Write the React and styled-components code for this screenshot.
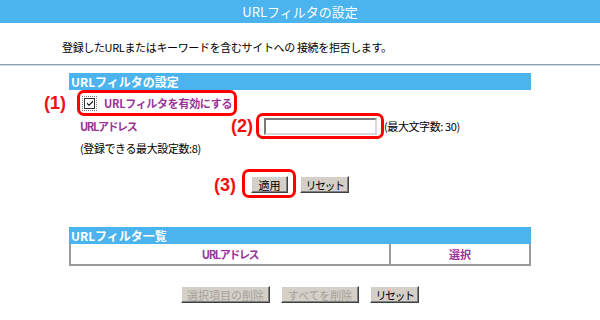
import React from 'react';
import styled, { createGlobalStyle } from 'styled-components';

const GlobalStyle = createGlobalStyle`
  body {
    margin: 0;
    background: #fff;
    font-family: "Noto Sans CJK JP", "Liberation Sans", sans-serif;
    font-size: 11px;
    color: #000;
  }
`;

const Page = styled.div`
  width: 600px;
  height: 320px;
  overflow: hidden;
`;

const TitleBar = styled.div`
  height: 23px;
  background: #4bb4ef;
  color: #fff;
  font-size: 13px;
  display: flex;
  align-items: center;
  justify-content: center;
`;

const Intro = styled.p`
  margin: 0;
  height: 41px;
  box-sizing: border-box;
  padding: 17px 0 0 62px;
  line-height: 14px;
  letter-spacing: -0.35px;
`;

const Divider = styled.div`
  height: 0;
  border-top: 1px solid #8a9fb1;
  border-bottom: 1px solid #cfdce7;
`;

const Panel = styled.div`
  width: 462px;
  margin: ${p => p.$top}px auto 0;
`;

const SectionHeader = styled.div`
  height: 17px;
  line-height: 17px;
  padding-left: 2px;
  background: #4bb4ef;
  color: #fff;
  font-size: 12px;
  font-weight: bold;
`;

const Row = styled.div`
  display: flex;
  align-items: center;
  height: ${p => p.$h || 22}px;
  margin-top: ${p => p.$mt || 0}px;
  padding-left: ${p => p.$pl || 0}px;
  justify-content: ${p => (p.$center ? 'center' : 'flex-start')};
  gap: ${p => p.$gap || 0}px;
`;

const Purple = styled.span`
  color: #993399;
  font-weight: bold;
  letter-spacing: ${p => p.$ls || 0}px;
  white-space: nowrap;
`;

const LabelCell = styled.div`
  width: 184px;
  padding-left: 11px;
`;

const Note = styled.span`
  margin-left: ${p => p.$ml || 0}px;
  letter-spacing: -0.4px;
  white-space: nowrap;
`;

const Mark = styled.span`
  position: relative;
  display: inline-flex;
  align-items: center;
  gap: 9px;

  &::after {
    content: '';
    position: absolute;
    top: ${p => -p.$t}px;
    right: ${p => -p.$r}px;
    bottom: ${p => -p.$b}px;
    left: ${p => -p.$l}px;
    border: 3px solid #f00;
    border-radius: 7px;
    pointer-events: none;
  }
`;

const MarkLabel = styled.span`
  position: absolute;
  top: 50%;
  right: calc(100% + ${p => p.$gap}px);
  transform: translateY(-50%);
  font-family: "Liberation Sans", sans-serif;
  font-weight: bold;
  font-size: 18px;
  color: #f01010;
  white-space: nowrap;
`;

const Checkbox = styled.span`
  width: 9px;
  height: 9px;
  border: 1px solid #333;
  outline: 1px dotted #777;
  outline-offset: 1px;
  background: #fff;
  display: flex;
  align-items: center;
  justify-content: center;
`;

const TextInput = styled.input`
  width: 113px;
  height: 17px;
  box-sizing: border-box;
  border: 2px solid;
  border-color: #7a7a7a #d8d8d8 #d8d8d8 #7a7a7a;
  background: #fff;
  padding: 0 2px;
  outline: none;
`;

const Button = styled.button`
  width: ${p => p.$w}px;
  height: 17px;
  padding: 0;
  box-sizing: border-box;
  background: #d4d0c8;
  border: 1px solid;
  border-color: #fff #404040 #404040 #fff;
  box-shadow: inset -1px -1px 0 #808080;
  font-family: "Noto Sans CJK JP", sans-serif;
  font-size: 11px;
  line-height: 14px;
  letter-spacing: ${p => p.$ls || 0}px;
  color: ${p => (p.disabled ? '#a4a09a' : '#000')};
  white-space: nowrap;
`;

const ListTable = styled.div`
  display: grid;
  grid-template-columns: 320px 1fr;
  height: 22px;
  box-sizing: border-box;
  border: 2px solid #9a9a9a;
  border-top: none;
`;

const ListHead = styled.div`
  display: flex;
  align-items: center;
  justify-content: center;
  border-right: ${p => (p.$split ? '2px solid #9a9a9a' : 'none')};
`;

const CheckMark = () => (
  <svg width="8" height="8" viewBox="0 0 8 8">
    <path d="M1 3.5 L3 5.5 L7 1.5 L7 3 L3 7 L1 5 Z" fill="#000" />
  </svg>
);

export default function App() {
  return (
    <Page>
      <GlobalStyle />
      <TitleBar>URLフィルタの設定</TitleBar>
      <Intro>登録したURLまたはキーワードを含むサイトへの 接続を拒否します。</Intro>
      <Divider />

      <Panel $top={7}>
        <SectionHeader>URLフィルタの設定</SectionHeader>
        <Row $h={24} $mt={1} $pl={15}>
          <Mark $t={5} $r={5} $b={5} $l={7}>
            <MarkLabel $gap={18}>(1)</MarkLabel>
            <Checkbox>
              <CheckMark />
            </Checkbox>
            <Purple $ls={-0.3}>URLフィルタを有効にする</Purple>
          </Mark>
        </Row>
        <Row>
          <LabelCell>
            <Purple $ls={-1.4}>URLアドレス</Purple>
          </LabelCell>
          <Mark $t={5} $r={7} $b={4} $l={8}>
            <MarkLabel $gap={11}>(2)</MarkLabel>
            <TextInput type="text" />
          </Mark>
          <Note $ml={7}>(最大文字数: 30)</Note>
        </Row>
        <Row $pl={11}>
          <Note>(登録できる最大設定数:8)</Note>
        </Row>
        <Row $h={17} $mt={17} $center $gap={12}>
          <Mark $t={7} $r={8} $b={5} $l={9}>
            <MarkLabel $gap={15}>(3)</MarkLabel>
            <Button $w={37}>適用</Button>
          </Mark>
          <Button $w={49} $ls={-1.5}>リセット</Button>
        </Row>
      </Panel>

      <Panel $top={34}>
        <SectionHeader>URLフィルタ一覧</SectionHeader>
        <ListTable>
          <ListHead $split>
            <Purple $ls={-1.4}>URLアドレス</Purple>
          </ListHead>
          <ListHead>
            <Purple>選択</Purple>
          </ListHead>
        </ListTable>
        <Row $h={17} $mt={20} $center $gap={11}>
          <Button $w={89} disabled>選択項目の削除</Button>
          <Button $w={78} disabled>すべてを削除</Button>
          <Button $w={49} $ls={-1.5}>リセット</Button>
        </Row>
      </Panel>
    </Page>
  );
}
